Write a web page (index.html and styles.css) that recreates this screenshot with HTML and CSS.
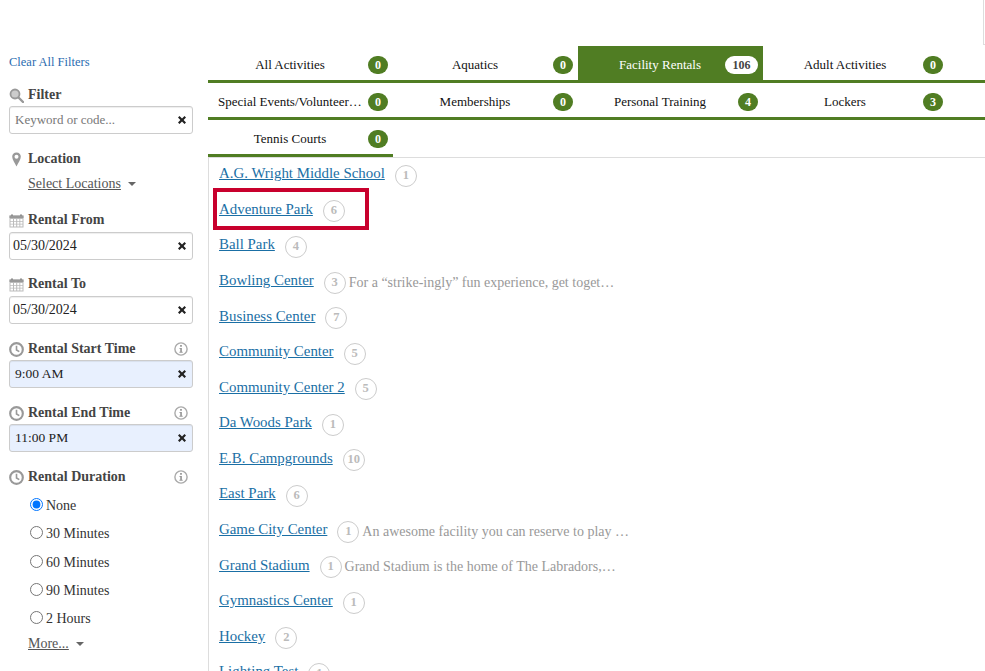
FILE: index.html
```html
<!DOCTYPE html>
<html lang="en">
<head>
<meta charset="utf-8">
<title>Facility Rentals</title>
<link rel="stylesheet" href="styles.css">
</head>
<body>
<svg class="defs" width="0" height="0" aria-hidden="true">
  <symbol id="i-clock" viewBox="0 0 14 14"><circle cx="7" cy="7" r="5.9" fill="none" stroke="#999" stroke-width="2"/><path d="M7 3.4V7.4L9.6 9" fill="none" stroke="#999" stroke-width="1.5"/></symbol>
  <symbol id="i-cal" viewBox="0 0 15 14"><path d="M0.5 2H14.5V14H0.5Z" fill="#bbb"/><path d="M2 1h2v2H2zM11 1h2v2h-2z" fill="#888"/><path d="M0.5 2H14.5V4.5H0.5Z" fill="#999"/><path d="M1.5 5.500h2.500v2h-2.500zM5 5.500h2.200v2H5zM8.200 5.500h2.200v2H8.200zM11.300 5.500h2.200v2h-2.200zM1.500 8.300h2.500v2h-2.500zM5 8.300h2.200v2H5zM8.200 8.300h2.200v2H8.200zM11.300 8.300h2.200v2h-2.200zM1.500 11h2.500v2h-2.500zM5 11h2.200v2H5zM8.200 11h2.200v2H8.200zM11.300 11h2.200v2h-2.200z" fill="#fff"/></symbol>
  <symbol id="i-info" viewBox="0 0 14 14"><circle cx="7" cy="7" r="6.100" fill="none" stroke="#aaa" stroke-width="1.400"/><path d="M6.100 3h1.800v1.700H6.100zM5.500 6h2.400v3.800h.8v.9H5.400v-.9h.8V6.900h-.7z" fill="#999"/></symbol>
  <symbol id="i-x" viewBox="0 0 10 10"><path d="M2.500 1L5 3.400 7.500 1 9 2.500 6.600 5 9 7.500 7.500 9 5 6.600 2.500 9 1 7.500 3.400 5 1 2.500Z" fill="#222"/></symbol>
</svg>
<div class="corner"></div>
<div class="page">
  <aside class="side">
    <a class="clear" href="#">Clear All Filters</a>
    <section class="group first">
      <h3 class="label"><svg class="ico" viewBox="0 0 15 15"><circle cx="6" cy="6" r="4.500" fill="#ccc" stroke="#999" stroke-width="1.800"/><path d="M9.500 9.500L14 14" stroke="#999" stroke-width="2.400" stroke-linecap="round"/></svg>Filter</h3>
      <div class="field"><span class="ph">Keyword or code...</span><svg class="x"><use href="#i-x"/></svg></div>
    </section>
    <section class="group loc">
      <h3 class="label"><svg class="ico" viewBox="0 0 15 15"><path d="M7.500 0.500C4.800 0.500 3.200 2.400 3.200 4.700 3.200 7.500 6 11 7.500 14.500 9 11 11.800 7.500 11.800 4.700 11.800 2.400 10.200 0.500 7.500 0.500Z" fill="#999"/><circle cx="7.500" cy="4.700" r="2" fill="#fff"/></svg>Location</h3>
      <div class="sel"><a href="#">Select Locations</a><span class="caret"></span></div>
    </section>
    <section class="group from">
      <h3 class="label"><svg class="ico"><use href="#i-cal"/></svg>Rental From</h3>
      <div class="field"><span class="val dt">05/30/2024</span><svg class="x"><use href="#i-x"/></svg></div>
    </section>
    <section class="group">
      <h3 class="label"><svg class="ico"><use href="#i-cal"/></svg>Rental To</h3>
      <div class="field"><span class="val dt">05/30/2024</span><svg class="x"><use href="#i-x"/></svg></div>
    </section>
    <section class="group time">
      <h3 class="label"><svg class="ico"><use href="#i-clock"/></svg>Rental Start Time<svg class="inf"><use href="#i-info"/></svg></h3>
      <div class="field auto"><span class="val">9:00 AM</span><svg class="x"><use href="#i-x"/></svg></div>
    </section>
    <section class="group time">
      <h3 class="label"><svg class="ico"><use href="#i-clock"/></svg>Rental End Time<svg class="inf"><use href="#i-info"/></svg></h3>
      <div class="field auto"><span class="val">11:00 PM</span><svg class="x"><use href="#i-x"/></svg></div>
    </section>
    <section class="group time">
      <h3 class="label"><svg class="ico"><use href="#i-clock"/></svg>Rental Duration<svg class="inf"><use href="#i-info"/></svg></h3>
      <div class="radios">
        <label class="radio"><input type="radio" name="d" checked>None</label>
        <label class="radio"><input type="radio" name="d">30 Minutes</label>
        <label class="radio"><input type="radio" name="d">60 Minutes</label>
        <label class="radio"><input type="radio" name="d">90 Minutes</label>
        <label class="radio"><input type="radio" name="d">2 Hours</label>
      </div>
      <div class="sel more"><a href="#">More...</a><span class="caret"></span></div>
    </section>
  </aside>
  <main class="main">
    <div class="row">
      <div class="tab"><span class="name">All Activities</span><span class="count">0</span></div>
      <div class="tab"><span class="name">Aquatics</span><span class="count">0</span></div>
      <div class="tab active"><span class="name">Facility Rentals</span><span class="count wide">106</span></div>
      <div class="tab"><span class="name">Adult Activities</span><span class="count">0</span></div>
      <div class="fill"></div>
    </div>
    <div class="row">
      <div class="tab"><span class="name">Special Events/Volunteering</span><span class="count">0</span></div>
      <div class="tab"><span class="name">Memberships</span><span class="count">0</span></div>
      <div class="tab"><span class="name">Personal Training</span><span class="count">4</span></div>
      <div class="tab"><span class="name">Lockers</span><span class="count">3</span></div>
      <div class="fill"></div>
    </div>
    <div class="row last">
      <div class="tab"><span class="name">Tennis Courts</span><span class="count">0</span></div>
    </div>
    <div class="list">
      <div class="item"><a href="#">A.G. Wright Middle School</a><span class="num">1</span></div>
      <div class="item mark-host"><a href="#">Adventure Park</a><span class="num">6</span><div class="mark"></div></div>
      <div class="item"><a href="#">Ball Park</a><span class="num">4</span></div>
      <div class="item"><a href="#">Bowling Center</a><span class="num">3</span><span class="desc">For a “strike-ingly” fun experience, get toget…</span></div>
      <div class="item"><a href="#">Business Center</a><span class="num">7</span></div>
      <div class="item"><a href="#">Community Center</a><span class="num">5</span></div>
      <div class="item"><a href="#">Community Center 2</a><span class="num">5</span></div>
      <div class="item"><a href="#">Da Woods Park</a><span class="num">1</span></div>
      <div class="item"><a href="#">E.B. Campgrounds</a><span class="num">10</span></div>
      <div class="item"><a href="#">East Park</a><span class="num">6</span></div>
      <div class="item"><a href="#">Game City Center</a><span class="num">1</span><span class="desc">An awesome facility you can reserve to play …</span></div>
      <div class="item"><a href="#">Grand Stadium</a><span class="num">1</span><span class="desc">Grand Stadium is the home of The Labradors,…</span></div>
      <div class="item"><a href="#">Gymnastics Center</a><span class="num">1</span></div>
      <div class="item"><a href="#">Hockey</a><span class="num">2</span></div>
      <div class="item"><a href="#">Lighting Test</a><span class="num">1</span></div>
    </div>
  </main>
</div>
</body>
</html>
```
FILE: styles.css
```css
* { box-sizing: border-box; }
html, body { margin: 0; height: 671px; overflow: hidden; background: #fff; }
body { font-family: "Liberation Serif", "Times New Roman", serif; color: #333; position: relative; }
.defs { position: absolute; }
.corner { position: absolute; top: 0; right: 0; width: 2px; height: 45px; border-left: 1px solid #ddd; border-bottom: 1px solid #ddd; }
.page { display: flex; padding-top: 46px; height: 671px; }
.side { width: 208px; flex: none; padding: 8px 15px 0 9px; }
.clear { display: block; font-size: 12.500px; line-height: 16px; color: #2b6cb0; text-decoration: none; }
.group { margin-top: 14px; }
.group.first { margin-top: 15px; }
.group.first .field { margin-top: 1px; }
.group.loc { margin-top: 15px; }
.group.from { margin-top: 17px; }
.label { display: flex; align-items: center; margin: 0; height: 20px; font-size: 14px; font-weight: bold; color: #444; line-height: 20px; }
.time .label { padding-top: 2px; }
.ico { width: 15px; height: 15px; margin-right: 4px; flex: none; }
.inf { width: 14px; height: 14px; margin-left: auto; margin-right: 5px; flex: none; }
.field { display: flex; align-items: center; justify-content: space-between; height: 28px; margin-top: 2px; border: 1px solid #ccc; border-radius: 3px; background: #fff; padding: 0 5px 0 3px; font-size: 14px; color: #222; box-shadow: inset 0 1px 1px rgba(0,0,0,.07); }
.field.auto { background: #e8f0fe; padding-left: 5px; font-size: 13.500px; }
.ph { font-size: 13px; color: #777; padding-left: 2px; }
.x { width: 10px; height: 10px; flex: none; }
.sel { margin: 6px 0 0 19px; font-size: 14px; line-height: 18px; color: #555; height: 18px; display: flex; align-items: center; }
.sel a { color: #555; }
.caret { width: 0; height: 0; margin-left: 7px; border-left: 4px solid transparent; border-right: 4px solid transparent; border-top: 4px solid #666; }
.radios { margin: 6px 0 0 21px; }
.radio { display: flex; align-items: center; height: 28.250px; font-size: 14px; color: #333; }
.radio input { margin: 0 3px 3px 0; width: 13px; height: 13px; flex: none; }
.more { margin-top: 2px; }
.main { flex: 1; min-width: 0; display: flex; flex-direction: column; }
.row { display: flex; height: 37px; flex: none; }
.tab { width: 185px; flex: none; display: flex; align-items: center; height: 37px; padding: 4px 5px 0 10px; border-bottom: 3px solid #507d23; font-size: 13px; color: #111; }
.fill { flex: 1; border-bottom: 3px solid #507d23; }
.name { flex: 1; min-width: 0; text-align: center; white-space: nowrap; overflow: hidden; text-overflow: ellipsis; padding-right: 6px; }
.count { flex: none; width: 20px; height: 18px; border-radius: 9px; background: #507d23; color: #fff; font-weight: bold; font-size: 12px; line-height: 18px; text-align: center; }
.active { background: #507d23; color: #fff; }
.active .count { width: 33px; margin-left: -13px; background: #fff; color: #444; }
.list { flex: 1; border-top: 1px solid #ddd; border-left: 1px solid #ddd; padding: 0 0 0 10px; overflow: hidden; }
.item { position: relative; display: flex; align-items: center; height: 35.580px; white-space: nowrap; }
.item a { font-size: 14.900px; color: #1a6fa5; text-decoration: underline; position: relative; top: -2px; }
.num { width: 22px; height: 22px; flex: none; margin: 0 0 0 10px; border: 1.500px solid #ccc; border-radius: 50%; font-size: 12.500px; font-weight: bold; line-height: 19px; text-align: center; color: #bbb; }
.desc { margin-left: 3px; font-size: 14px; color: #999; }
.mark { position: absolute; left: -6px; top: -6px; width: 156px; height: 42px; border: 4px solid #c8002d; pointer-events: none; }
```
